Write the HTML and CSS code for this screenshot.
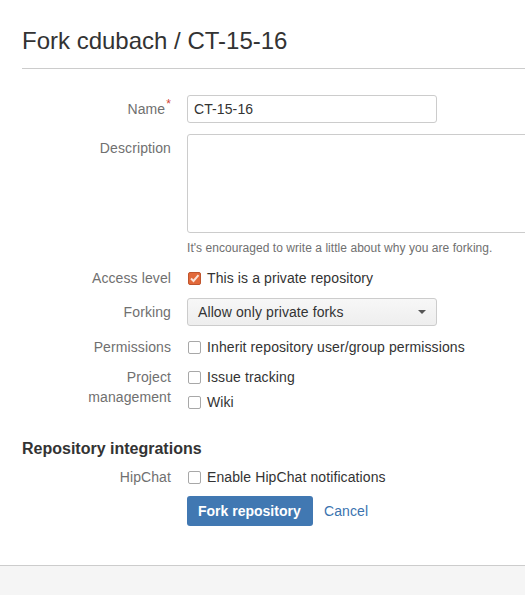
FILE: index.html
```html
<!DOCTYPE html>
<html>
<head>
<meta charset="utf-8">
<link rel="stylesheet" href="styles.css">
</head>
<body>
<div class="page">
  <h1 class="title">Fork cdubach / CT-15-16</h1>
  <form class="form">
    <div class="row row-name">
      <label class="label">Name<span class="req">*</span></label>
      <div class="field"><div class="input">CT-15-16</div></div>
    </div>
    <div class="row row-desc">
      <label class="label label-top">Description</label>
      <div class="field">
        <div class="textarea"></div>
        <div class="help">It's encouraged to write a little about why you are forking.</div>
      </div>
    </div>
    <div class="row row-access">
      <label class="label">Access level</label>
      <div class="field">
        <div class="check"><span class="box checked"><svg width="13" height="13" viewBox="0 0 13 13"><path d="M3 6.5 L5.5 9 L10.5 3.2" fill="none" stroke="#fbe3d8" stroke-width="2"/></svg></span>This is a private repository</div>
      </div>
    </div>
    <div class="row row-fork">
      <label class="label">Forking</label>
      <div class="field">
        <div class="select">Allow only private forks<span class="caret"></span></div>
      </div>
    </div>
    <div class="row row-perm">
      <label class="label">Permissions</label>
      <div class="field">
        <div class="check"><span class="box"></span>Inherit repository user/group permissions</div>
      </div>
    </div>
    <div class="row row-proj">
      <label class="label">Project<br>management</label>
      <div class="field checks">
        <div class="check"><span class="box"></span>Issue tracking</div>
        <div class="check"><span class="box"></span>Wiki</div>
      </div>
    </div>
    <h2 class="section">Repository integrations</h2>
    <div class="row row-hip">
      <label class="label">HipChat</label>
      <div class="field">
        <div class="check"><span class="box"></span>Enable HipChat notifications</div>
      </div>
    </div>
    <div class="row row-actions">
      <div></div>
      <div class="field actions">
        <span class="btn">Fork repository</span>
        <a class="cancel">Cancel</a>
      </div>
    </div>
  </form>
</div>
<div class="footer"></div>
</body>
</html>
```

FILE: styles.css
```css
html, body {
  margin: 0;
  padding: 0;
  background: #fff;
  overflow: hidden;
}
body {
  font-family: "Liberation Sans", Arial, sans-serif;
  font-size: 14px;
  letter-spacing: 0.1px;
  color: #333;
  width: 525px;
  height: 595px;
  display: flex;
  flex-direction: column;
}
.page {
  padding: 0 0 0 22px;
  height: 565px;
  box-sizing: border-box;
  overflow: hidden;
}
.title {
  margin: 0;
  padding-top: 27px;
  font-size: 24px;
  letter-spacing: 0;
  line-height: 28px;
  font-weight: normal;
  color: #333;
  padding-bottom: 13px;
  border-bottom: 1px solid #ccc;
}
.form {
  padding-top: 26px;
}
.row {
  display: grid;
  grid-template-columns: 149px 1fr;
  column-gap: 16px;
}
.label {
  text-align: right;
  color: #707070;
  line-height: 20px;
}
.req {
  color: #d04437;
  font-size: 12px;
  position: relative;
  top: -6px;
  margin-left: 1px;
}
.row-name .label {
  padding-top: 4px;
}
.input {
  width: 250px;
  height: 28px;
  box-sizing: border-box;
  border: 1px solid #ccc;
  border-radius: 3px;
  padding: 0 6px;
  line-height: 26px;
  background: #fff;
}
.row-desc {
  margin-top: 11px;
}
.label-top {
  padding-top: 4px;
}
.textarea {
  width: 400px;
  height: 99px;
  box-sizing: border-box;
  border: 1px solid #ccc;
  border-radius: 3px;
  background: #fff;
}
.help {
  font-size: 12px;
  letter-spacing: 0.05px;
  color: #707070;
  line-height: 14px;
  margin-top: 8px;
}
.row-access {
  margin-top: 13px;
}
.check {
  display: flex;
  align-items: center;
  line-height: 20px;
  height: 20px;
}
.box {
  width: 13px;
  height: 13px;
  box-sizing: border-box;
  border: 1px solid #a8a8a8;
  border-radius: 2px;
  margin-left: 1px;
  margin-right: 6px;
  background: #fff;
  display: inline-block;
  flex: none;
  position: relative;
}
.box.checked {
  background: #e2693a;
  border-color: #c0552d;
}
.box svg {
  position: absolute;
  left: -1px;
  top: -1px;
}
.row-fork {
  margin-top: 10px;
}
.row-fork .label {
  padding-top: 4px;
}
.select {
  width: 250px;
  height: 28px;
  box-sizing: border-box;
  border: 1px solid #ccc;
  border-radius: 3px;
  padding: 0 10px;
  line-height: 26px;
  background: linear-gradient(#f7f7f7, #eeeeee);
  position: relative;
}
.caret {
  position: absolute;
  right: 10px;
  top: 11px;
  width: 0;
  height: 0;
  border-left: 4px solid transparent;
  border-right: 4px solid transparent;
  border-top: 4px solid #555;
}
.row-perm {
  margin-top: 11px;
}
.row-proj {
  margin-top: 10px;
}
.checks {
  display: flex;
  flex-direction: column;
  gap: 5px;
}
.section {
  margin: 27px 0 0 0;
  font-size: 16px;
  line-height: 20px;
  font-weight: bold;
  color: #333;
  letter-spacing: 0;
}
.row-hip {
  margin-top: 8px;
}
.row-actions {
  margin-top: 9px;
}
.actions {
  display: flex;
  align-items: center;
  gap: 11px;
}
.btn {
  display: inline-block;
  background: #4178b2;
  color: #fff;
  font-weight: bold;
  height: 30px;
  line-height: 30px;
  padding: 0 11px;
  border-radius: 3px;
  box-sizing: border-box;
  width: 126px;
  letter-spacing: 0;
}
.cancel {
  color: #3b73af;
  text-decoration: none;
}
.footer {
  flex: 1;
  background: #f5f5f5;
  border-top: 1px solid #ccc;
}
```
